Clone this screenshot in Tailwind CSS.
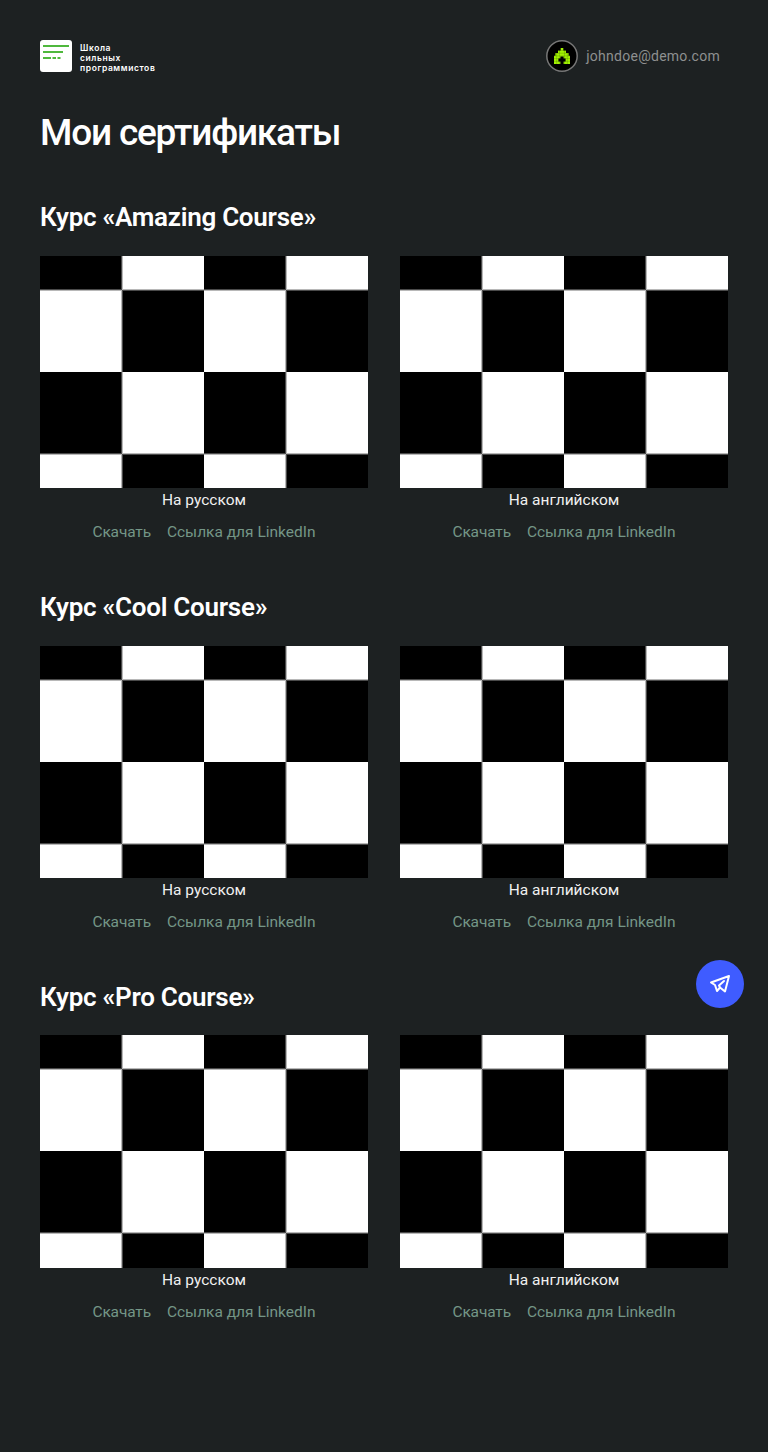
<!DOCTYPE html>
<html lang="ru">
<head>
<meta charset="utf-8">
<title>Мои сертификаты</title>
<script src="https://cdn.jsdelivr.net/npm/@tailwindcss/browser@4"></script>
</head>
<body class="min-h-[1452px] bg-[#1d2122] text-white font-['Roboto','Liberation_Sans',sans-serif]">
<svg class="hidden">
  <symbol id="board" viewBox="0 0 328 233">
    <rect width="328" height="233" fill="#fff"/>
    <path fill="#000" d="M0 0h82v34H0zM164 0h82v34h-82zM82 34h82v82H82zM246 34h82v82h-82zM0 116h82v82H0zM164 116h82v82h-82zM82 198h82v35H82zM246 198h82v35h-82z"/>
    <path fill="#4a4a4a" d="M81 0h1v34h-1zM245 0h1v34h-1zM82 34h1v82h-1zM246 34h1v82h-1zM81 116h1v82h-1zM245 116h1v82h-1zM82 198h1v35h-1zM246 198h1v35h-1zM0 33h82v1H0zM164 33h82v1h-82zM82 34h82v1H82zM246 34h82v1h-82zM0 197h82v1H0zM164 197h82v1h-82zM82 198h82v1H82zM246 198h82v1h-82z"/>
    <path fill="#b8b8b8" d="M82 0h1v34h-1zM246 0h1v34h-1zM81 34h1v82h-1zM245 34h1v82h-1zM82 116h1v82h-1zM246 116h1v82h-1zM81 198h1v35h-1zM245 198h1v35h-1zM0 34h82v1H0zM164 34h82v1h-82zM82 33h82v1H82zM246 33h82v1h-82zM0 198h82v1H0zM164 198h82v1h-82zM82 197h82v1H82zM246 197h82v1h-82z"/>
  </symbol>
</svg>
<header class="flex h-8 mt-10 ml-10 mr-12 items-center justify-between">
  <a class="flex gap-2 items-center">
    <svg class="size-8" viewBox="0 0 32 32"><rect width="32" height="32" rx="3" fill="#fff"/><path d="M3 6h26M3 12h20M3 18h8M12.500 18h3.500M17.500 18h3" stroke="#4fb83d" stroke-width="2"/></svg>
    <span class="font-['Inter'] font-semibold text-[8.5px] leading-[10px] tracking-[0.6px] whitespace-nowrap pt-[3px]">Школа<br>сильных<br>программистов</span>
  </a>
  <a class="flex gap-2 items-center">
    <svg class="size-8" viewBox="0 0 32 32"><circle cx="16" cy="16" r="15.200" fill="#000" stroke="#777" stroke-width="1.500"/><path fill="#a2f300" d="M14.700 8h2.600v2.400h2.700v2.700h2.600v2.600h1.400V24h-6.400v-2.400h2v-3h-2v-2.200h-3.200v2.200h-2v3h2V24H8v-8.300h1.400v-2.600H12v-2.700h2.700z"/><path stroke="#000" stroke-opacity=".4" stroke-width=".4" d="M12 10.500h8M9 13.200h14M8 15.900h16M8 18.600h16M8 21.300h16M10.700 13v11M13.400 10v14M18.600 10v14M21.300 13v11"/></svg>
    <span class="text-[14px] leading-5 font-normal tracking-[0.27px] text-[#8e9090] whitespace-nowrap">johndoe@demo.com</span>
  </a>
</header>
<main class="px-10">
  <h1 class="mt-[39px] text-[37px] leading-[44px] font-medium tracking-[-1.2px] whitespace-nowrap">Мои сертификаты</h1>
  <div id="courses" class="mt-[45px]"></div>
</main>
<a class="fixed left-[696px] top-[960px] size-12 rounded-full bg-[#3f5cff] flex items-center justify-center">
  <svg class="size-6" viewBox="0 0 24 24" fill="none" stroke="#fff" stroke-width="2" stroke-linejoin="round" stroke-linecap="round"><path d="M21 4 3 10.500l4 2.500 2 6 3-3.500 5 4zM16 9l-5 4.500 1 2"/></svg>
</a>
<script>
const cert = (lang, h) => `<div class="flex flex-col items-center">
  <svg class="w-[328px] ${h}" viewBox="0 0 328 ${h === 'h-[233px]' ? 233 : 232}"><use href="#board" width="328" height="233"/></svg>
  <p class="text-[15.5px] leading-6 font-normal text-[#f0f0f0] whitespace-nowrap">${lang}</p>
  <div class="mt-2 flex gap-4 text-[15.5px] leading-6 font-normal text-[#749687] whitespace-nowrap"><a class="tracking-[-0.15px]">Скачать</a><a>Ссылка для LinkedIn</a></div>
</div>`;
document.getElementById('courses').innerHTML = [['Amazing','h-[232px]','mb-[22px]'],['Cool','h-[232px]','mb-[22px]'],['Pro','h-[233px]','mb-[21px]']].map(([n,h,m]) =>
 `<section class="mb-[46px]"><h2 class="text-[26px] leading-[34px] font-semibold tracking-[-0.27px] ${m} whitespace-nowrap">Курс «${n} Course»</h2>
 <div class="grid grid-cols-2 gap-8">${cert('На русском',h)}${cert('На английском',h)}</div></section>`).join('');
</script>
</body>
</html>
